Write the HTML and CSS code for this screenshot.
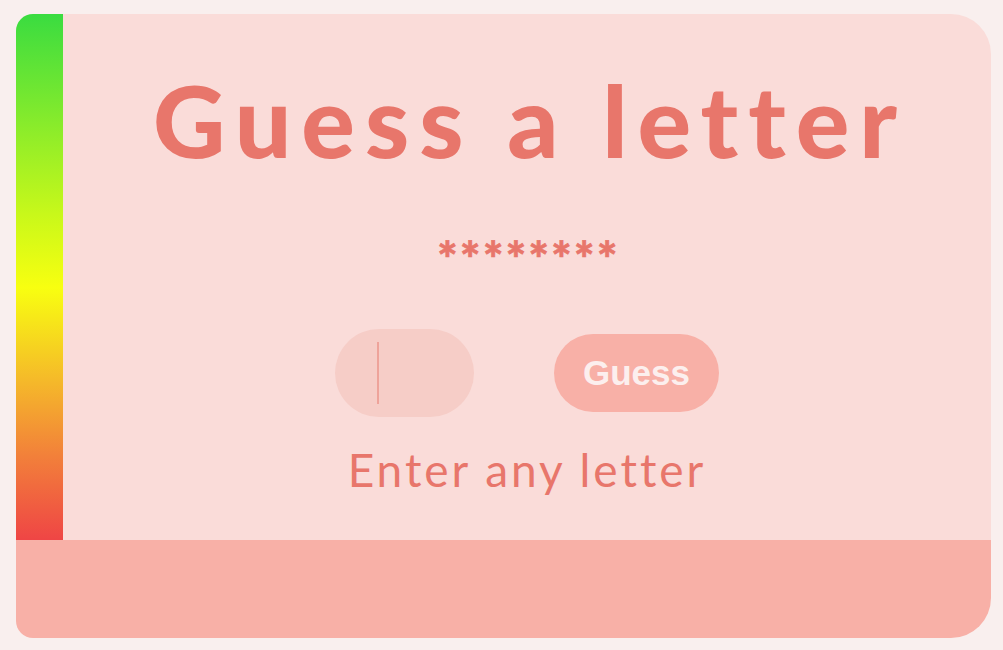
FILE: index.html
```html
<!DOCTYPE html>
<html>
<head>
<meta charset="utf-8">
<link rel="stylesheet" href="styles.css">
</head>
<body>
<div class="card">
  <div class="top">
    <div class="bar"></div>
    <div class="content">
      <h1 class="title">Guess a letter</h1>
      <div class="word">********</div>
      <div class="controls">
        <div class="input"><span class="caret"></span></div>
        <button class="btn">Guess</button>
      </div>
      <p class="hint">Enter any letter</p>
    </div>
  </div>
  <div class="bottom"></div>
</div>
</body>
</html>
```
FILE: styles.css
```css
html, body { margin: 0; padding: 0; }
body {
  background: #f9efee;
  padding: 14px 12px 12px 16px;
  font-family: "Lato", "Noto Sans", sans-serif;
}
.card {
  width: 975px;
  height: 624px;
  display: flex;
  flex-direction: column;
  border-radius: 17px 40px 40px 17px;
  overflow: hidden;
}
.top { display: flex; height: 526px; }
.bar {
  width: 47px;
  background: linear-gradient(#3adc40 0%, #c8f81a 38%, #f8ff10 52%, #f5b82a 70%, #f2803a 84%, #ef4545 100%);
}
.content {
  flex: 1;
  background: #fadcd9;
  display: flex;
  flex-direction: column;
  align-items: center;
  color: #e8766b;
}
.title {
  margin: 55px 0 0;
  font-size: 100px;
  line-height: 1;
  font-weight: 900;
  letter-spacing: 10px;
  padding-left: 6px;
}
.word {
  margin-top: 65px;
  height: 36px;
  padding-top: 1px;
  box-sizing: border-box;
  font-size: 48px;
  font-weight: 900;
  letter-spacing: 2.4px;
  line-height: 1;
  padding-left: 3px;
  -webkit-text-stroke: 0.7px #e8766b;
}
.controls {
  margin-top: 59px;
  display: flex;
  align-items: center;
  gap: 80px;
}
.input {
  width: 139px;
  height: 88px;
  border-radius: 44px;
  background: #f6cdc7;
  display: flex;
  align-items: center;
  padding-left: 42px;
  box-sizing: border-box;
}
.caret { width: 2px; height: 62px; background: #eea39a; }
.btn {
  width: 165px;
  height: 78px;
  border: none;
  border-radius: 39px;
  background: #f8b0a7;
  color: #fcefee;
  font-family: "Liberation Sans", Arial, sans-serif;
  font-weight: bold;
  font-size: 35px;
  padding: 0;
}
.hint {
  margin: 25px 0 0;
  font-size: 46px;
  font-weight: 400;
  letter-spacing: 3px;
  line-height: 1.2;
}
.bottom { height: 98px; background: #f8b0a7; }
```
